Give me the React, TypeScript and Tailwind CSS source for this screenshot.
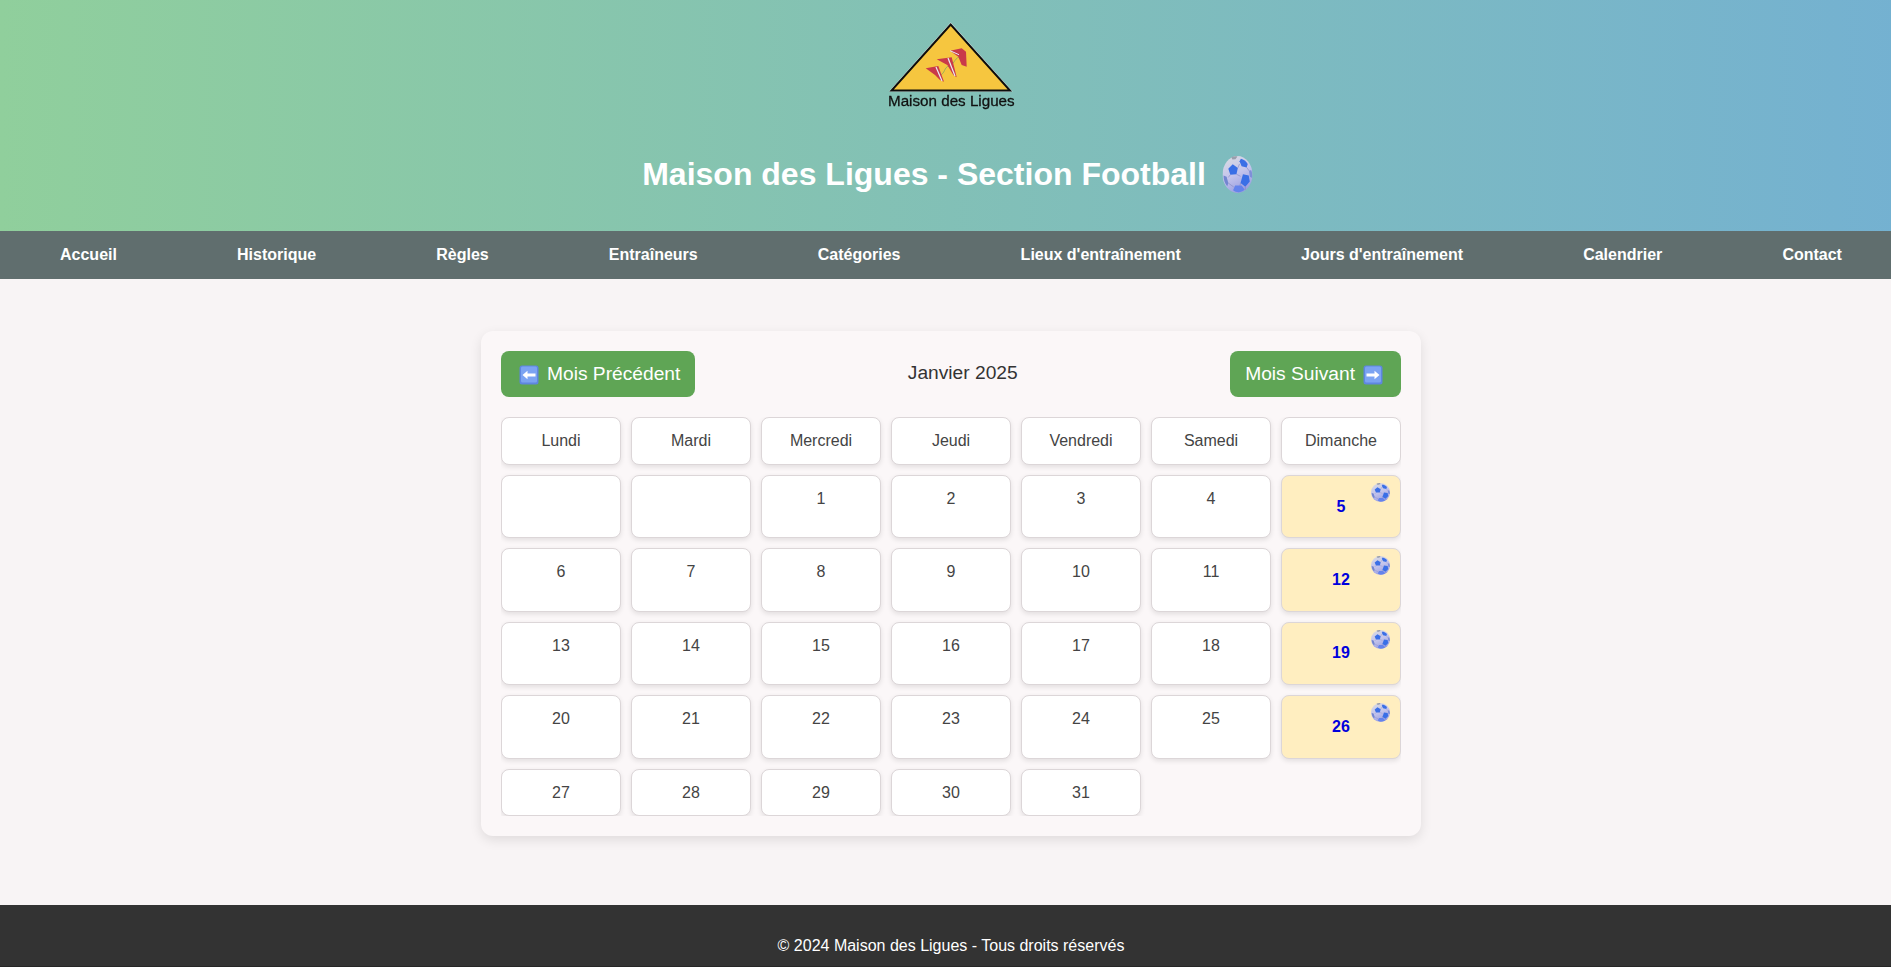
const navItems = ["Accueil", "Historique", "Règles", "Entraîneurs", "Catégories", "Lieux d'entraînement", "Jours d'entraînement", "Calendrier", "Contact"];
const weekDays = ["Lundi", "Mardi", "Mercredi", "Jeudi", "Vendredi", "Samedi", "Dimanche"];
const matchDays = [5, 12, 19, 26];

const Ball = ({ className, id }: { className: string; id: string }) => (
    <svg viewBox="0 0 88 93" preserveAspectRatio="none" className={className}>
        <defs>
            <linearGradient id={id} x1="0.2" y1="0" x2="0.6" y2="1">
                <stop offset="0%" stopColor="#d9dbe2" />
                <stop offset="50%" stopColor="#c4c4ec" />
                <stop offset="100%" stopColor="#979ce0" />
            </linearGradient>
        </defs>
        <ellipse cx="44" cy="46.500" rx="44" ry="46.500" fill={`url(#${id})`} />
        <path d="M30 21l15 9-4 16-18 1-6-15z" fill="#3a6fe6" />
        <path d="M54 7c8 2 15 6 20 13l-3 9-15-3-6-13z" fill="#3a6fe6" />
        <path d="M60 46l17 3 3 15-13 13-14-9z" fill="#3a6fe6" />
        <path d="M31 86l6-12 19 0 9 10c-10 9-24 9-34 2z" fill="#6483ec" />
        <path d="M3 49l9 3 5 16-3 8C7 69 3 60 3 49z" fill="#7386d0" />
        <path d="M26 3c5-2 11-3 18-2l-6 7-9 1z" fill="#9a9eac" />
        <path d="M84 35c3 6 4 12 3 20l-7-3-2-14z" fill="#7f8fd8" />
        <g stroke="#8084bc" strokeWidth="1.500" fill="none">
            <path d="M41 46l12 5M23 47l-6 7M45 30l5-10M71 29l8 9M53 68l-2 7M67 77l0 8M17 68l16 10" />
        </g>
    </svg>
);

const ArrowKey = ({ left }: { left?: boolean }) => (
    <svg viewBox="0 0 20 20" className="w-[20px] h-[20px] shrink-0">
        <rect x="0.500" y="0.500" width="19" height="19" rx="2.500" fill="#5f86e0" />
        <rect x="2" y="1.500" width="16" height="16" rx="1.500" fill="#7ba3f2" />
        <path
            d={left ? "M3.500 10l5-4.200v2.700h8v3h-8v2.700z" : "M16.500 10l-5-4.200v2.700h-8v3h8v2.700z"}
            fill="#ffffff"
        />
    </svg>
);

const Logo = () => (
    <div className="relative w-[126px] h-[90px] blur-[0.4px]">
        <svg viewBox="0 0 126 74" className="w-[126px] h-[74px] block">
            <path d="M62.700 2.500L1 71.500h123.500z" fill="#ffffff" />
            <path d="M62.700 4.500L3.500 70.500h118.500z" fill="#f6c63f" stroke="#0d0d0d" strokeWidth="2" />
            <path d="M52 55c5-1 4-8 9-9 5-1 5-7 10-9" fill="none" stroke="#86a85a" strokeWidth="0.800" />
            <path d="M37.700 48.300L50.300 46 56 61.700 52 60 47 55z" fill="#c9394a" />
            <path d="M48 47l6 14" stroke="#e8edf5" strokeWidth="1.200" />
            <path d="M48.700 39.300L63.700 37.300 68.700 57.300 65.300 55 59.300 45z" fill="#c9394a" />
            <path d="M60 38l7 18" stroke="#e8edf5" strokeWidth="1.200" />
            <path d="M62 30.700L73.700 28.300 78 31.700 78.700 46.700 73.700 45 70.300 36.700z" fill="#c9394a" />
            <path d="M62 30.700l9 4" stroke="#e8edf5" strokeWidth="1" />
        </svg>
        <div className="absolute left-0 right-0 top-[73px] text-center text-[15.200px] leading-[16px] text-[#111] [-webkit-text-stroke:0.3px_#111] whitespace-nowrap">
            Maison des Ligues
        </div>
    </div>
);

const Cell = ({ children, className }: { children?: React.ReactNode; className: string }) => (
    <div className={`relative rounded-[8px] border border-[#dcd6d8] text-center text-[16px] leading-[18px] shadow-[0_2px_5px_rgba(0,0,0,0.1)] ${className}`}>
        {children}
    </div>
);

export default function App() {
    const days: (number | null)[] = [null, null];
    for (let d = 1; d <= 31; d++) days.push(d);

    return (
        <div className="h-[967px] overflow-hidden">
            <div className="w-[1902px] h-[967px] flex flex-col bg-[#f8f4f5] font-['Liberation_Sans',Arial,sans-serif]">
                {/* HEADER */}
                <header className="h-[231px] shrink-0 flex flex-col items-center bg-[linear-gradient(to_right,#90cf9c,#74b1d1)]">
                    <div className="mt-[20px]">
                        <Logo />
                    </div>
                    <h1 className="mt-[46px] -translate-x-[3.500px] flex items-center text-[32px] leading-[37px] font-bold text-white">
                        Maison des Ligues - Section Football
                        <Ball id="ball-title" className="w-[30px] h-[37px] ml-[17px]" />
                    </h1>
                </header>

                {/* NAV */}
                <nav className="h-[48px] shrink-0 flex items-center justify-between px-[60px] bg-[#606e6e] text-[16px] font-bold text-white">
                    {navItems.map((item) => (
                        <a key={item} href="#">{item}</a>
                    ))}
                </nav>

                {/* CALENDAR */}
                <main className="flex-1 flex justify-center pt-[52px]">
                    <div className="w-[940px] h-[505px] p-[20px] rounded-[12px] bg-[#fbf7f8] shadow-[0_4px_12px_rgba(0,0,0,0.1)]">
                        <div className="flex items-center justify-between h-[46px] mb-[20px]">
                            <button className="flex items-center gap-[8px] h-[46px] pl-[18px] pr-[15px] pt-[1px] rounded-[8px] bg-[#5fa555] text-[19.200px] text-white">
                                <ArrowKey left />
                                Mois Précédent
                            </button>
                            <span className="text-[19.200px] text-[#333] -mt-[1px]">Janvier 2025</span>
                            <button className="flex items-center gap-[8px] h-[46px] pl-[15px] pr-[18px] pt-[1px] rounded-[8px] bg-[#5fa555] text-[19.200px] text-white">
                                Mois Suivant
                                <ArrowKey />
                            </button>
                        </div>

                        <div className="grid grid-cols-7 gap-[10px] overflow-hidden [grid-template-rows:48px_63.400px_63.400px_63.400px_63.400px_47.400px]">
                            {weekDays.map((day) => (
                                <Cell key={day} className="flex items-center justify-center bg-white text-[#444]">
                                    {day}
                                </Cell>
                            ))}
                            {days.map((day, i) => {
                                if (day !== null && matchDays.includes(day)) {
                                    return (
                                        <Cell key={i} className="flex items-center justify-center bg-[#ffeec0] font-bold text-[#0000dd]">
                                            {day}
                                            <Ball id={"ball-" + day} className="absolute top-[7px] right-[10px] w-[19px] h-[19px]" />
                                        </Cell>
                                    );
                                }
                                return (
                                    <Cell key={i} className="pt-[14px] bg-white text-[#444]">
                                        {day}
                                    </Cell>
                                );
                            })}
                        </div>
                    </div>
                </main>

                {/* FOOTER */}
                <footer className="h-[62px] shrink-0 pt-[32px] border-b border-[#262626] bg-[#333333] text-center text-[16px] leading-[18px] text-white">
                    © 2024 Maison des Ligues - Tous droits réservés
                </footer>
            </div>
        </div>
    );
}
